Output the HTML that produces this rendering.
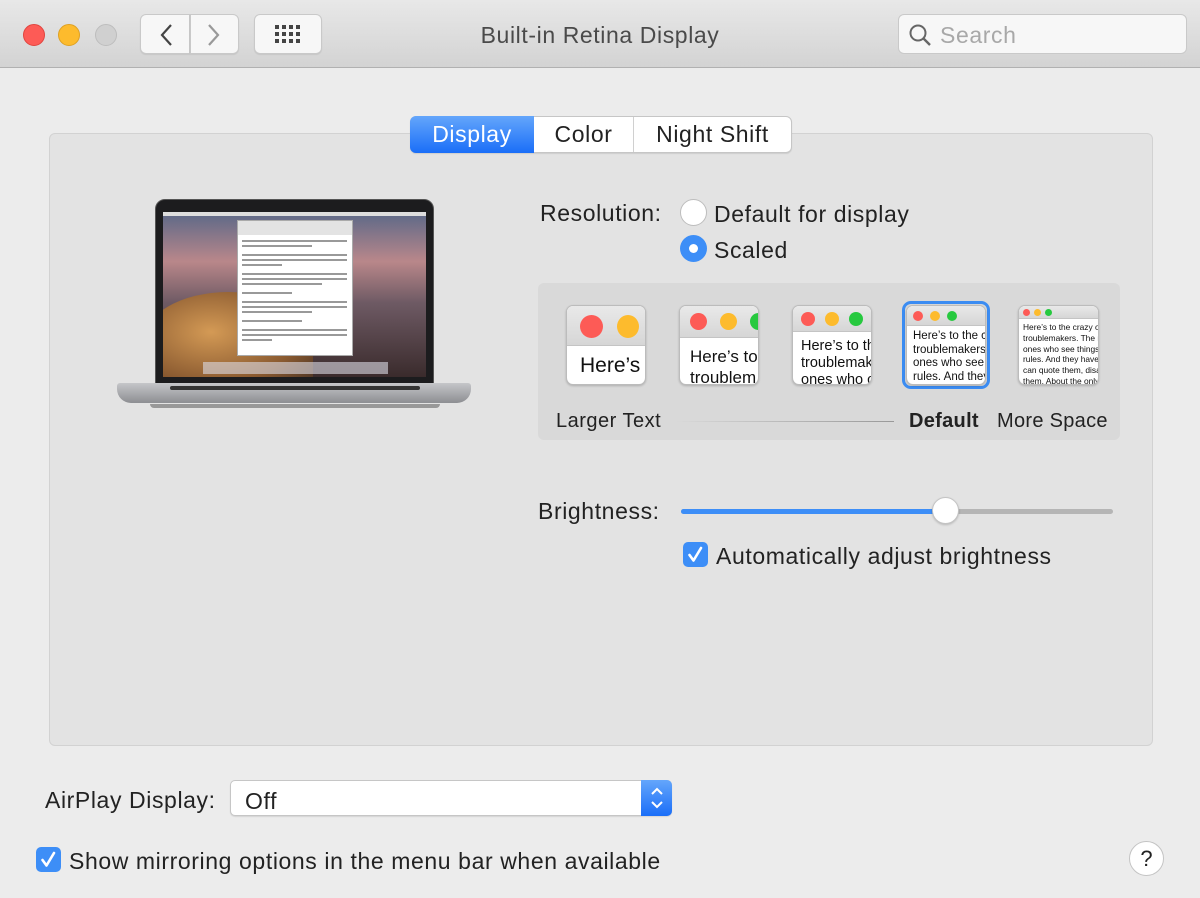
<!DOCTYPE html>
<html><head><meta charset="utf-8"><style>
*{box-sizing:border-box;margin:0;padding:0}
body{width:1200px;height:898px;background:#ececec;font-family:"Liberation Sans",sans-serif;color:#222;position:relative;overflow:hidden}
.a{position:absolute}
.tb{left:0;top:0;width:1200px;height:68px;background:linear-gradient(#e8e8e8,#d3d3d3);border-bottom:1px solid #b1b1b1}
.dot{width:22px;height:22px;border-radius:50%}
.btn{background:#f7f7f7;border:1px solid #c9c9c9;border-radius:6px;height:40px;top:14px;box-shadow:0 1px 1px rgba(0,0,0,.08)}
.lbl{font-size:23px;letter-spacing:0.6px;white-space:nowrap}
.thumb{background:#fff;border:1px solid #bcbcbc;border-radius:7px;overflow:hidden;box-shadow:0 1px 2px rgba(0,0,0,.2)}
.th{background:linear-gradient(#e9e9e9,#d6d6d6);border-bottom:1px solid #c4c4c4;position:relative}
.c{position:absolute;border-radius:50%}
.tt{color:#111;white-space:nowrap;position:absolute}
.ln{position:absolute;left:4px;height:1.5px;background:#999}
</style></head><body>
<div class="a tb"></div>
<div class="a dot" style="left:23px;top:24px;background:#fd5b56;border:1px solid #e0443e"></div>
<div class="a dot" style="left:58px;top:24px;background:#fdbb2d;border:1px solid #dea123"></div>
<div class="a dot" style="left:95px;top:24px;background:#d0d0d0;border:1px solid #bdbdbd"></div>
<div class="a btn" style="left:140px;width:50px;border-radius:6px 0 0 6px"></div>
<div class="a btn" style="left:190px;width:49px;border-radius:0 6px 6px 0"></div>
<svg class="a" style="left:155px;top:22px" width="80" height="26"><path d="M16 3 L7 13 L16 23" stroke="#444" stroke-width="2.2" fill="none"/><path d="M54 3 L63 13 L54 23" stroke="#999" stroke-width="2.2" fill="none"/></svg>
<div class="a btn" style="left:254px;width:68px"></div>
<svg class="a" style="left:275px;top:25px" width="28" height="20"><g fill="#444">
<rect x="0" y="0" width="4" height="4"/><rect x="7" y="0" width="4" height="4"/><rect x="14" y="0" width="4" height="4"/><rect x="21" y="0" width="4" height="4"/>
<rect x="0" y="7" width="4" height="4"/><rect x="7" y="7" width="4" height="4"/><rect x="14" y="7" width="4" height="4"/><rect x="21" y="7" width="4" height="4"/>
<rect x="0" y="14" width="4" height="4"/><rect x="7" y="14" width="4" height="4"/><rect x="14" y="14" width="4" height="4"/><rect x="21" y="14" width="4" height="4"/></g></svg>
<div class="a lbl" style="left:0;width:1200px;text-align:center;top:22px;font-size:23px;color:#4a4a4a">Built-in Retina Display</div>
<div class="a" style="left:898px;top:14px;width:289px;height:40px;background:#f7f7f7;border:1px solid #c9c9c9;border-radius:6px"></div>
<svg class="a" style="left:908px;top:23px" width="24" height="24"><circle cx="10" cy="10" r="7.5" stroke="#666" stroke-width="2" fill="none"/><path d="M15.5 15.5 L22 22" stroke="#666" stroke-width="2.4"/></svg>
<div class="a lbl" style="left:940px;top:22px;color:#a8a8a8">Search</div>

<div class="a" style="left:49px;top:133px;width:1104px;height:613px;background:#e3e3e3;border:1px solid #d2d2d2;border-radius:6px"></div>
<div class="a" style="left:410px;top:116px;width:382px;height:37px;background:#fff;border:1px solid #c6c6c6;border-radius:6px;box-shadow:0 1px 1px rgba(0,0,0,.1)"></div>
<div class="a" style="left:410px;top:116px;width:124px;height:37px;background:linear-gradient(#64a6fb,#1a6ef8);border-radius:6px 0 0 6px"></div>
<div class="a" style="left:633px;top:117px;width:1px;height:35px;background:#d0d0d0"></div>
<div class="a lbl" style="left:410px;width:124px;text-align:center;top:121px;color:#fff">Display</div>
<div class="a lbl" style="left:534px;width:99px;text-align:center;top:121px">Color</div>
<div class="a lbl" style="left:634px;width:157px;text-align:center;top:121px">Night Shift</div>

<!-- laptop -->
<div class="a" style="left:155px;top:199px;width:279px;height:186px;background:#1c1c1e;border-radius:10px 10px 0 0;border:1px solid #555"></div>
<div class="a" style="left:163px;top:212px;width:263px;height:165px;background:linear-gradient(#5b6888 0%,#b9878a 30%,#6e5a64 55%,#3a2b2c 100%);overflow:hidden">
<div class="a" style="left:0;top:0;width:263px;height:4px;background:#ddd"></div>
<div class="a" style="left:-20px;top:80px;width:170px;height:100px;background:radial-gradient(ellipse at 40% 40%,#d49a55,#8a5a30 60%,#3b2a22);border-radius:50% 50% 0 0"></div>
<div class="a" style="left:74px;top:8px;width:116px;height:136px;background:#fff;border:1px solid #aaa">
<div class="a" style="left:0;top:0;width:114px;height:14px;background:#e3e3e3"></div>
<div class="ln" style="top:19px;width:105px"></div><div class="ln" style="top:24px;width:70px"></div>
<div class="ln" style="top:33px;width:105px"></div><div class="ln" style="top:38px;width:105px"></div><div class="ln" style="top:43px;width:40px"></div>
<div class="ln" style="top:52px;width:105px"></div><div class="ln" style="top:57px;width:105px"></div><div class="ln" style="top:62px;width:80px"></div>
<div class="ln" style="top:71px;width:50px"></div>
<div class="ln" style="top:80px;width:105px"></div><div class="ln" style="top:85px;width:105px"></div><div class="ln" style="top:90px;width:70px"></div>
<div class="ln" style="top:99px;width:60px"></div>
<div class="ln" style="top:108px;width:105px"></div><div class="ln" style="top:113px;width:105px"></div><div class="ln" style="top:118px;width:30px"></div>
</div>
<div class="a" style="left:40px;top:150px;width:185px;height:12px;background:rgba(220,220,230,.6)"></div>
</div>
<div class="a" style="left:117px;top:383px;width:354px;height:20px;background:linear-gradient(#c5c6c9,#8d8e92);border-radius:3px 3px 14px 14px"></div>
<div class="a" style="left:170px;top:386px;width:250px;height:4px;background:#333;border-radius:2px"></div>
<div class="a" style="left:150px;top:404px;width:290px;height:4px;background:#666;border-radius:0 0 20px 20px;opacity:.6"></div>

<!-- resolution -->
<div class="a lbl" style="left:540px;top:200px">Resolution:</div>
<div class="a" style="left:680px;top:199px;width:27px;height:27px;border-radius:50%;background:#fff;border:1px solid #bdbdbd"></div>
<div class="a lbl" style="left:714px;top:201px">Default for display</div>
<div class="a" style="left:680px;top:235px;width:27px;height:27px;border-radius:50%;background:#3d8ef7"></div>
<div class="a" style="left:689px;top:244px;width:9px;height:9px;border-radius:50%;background:#fff"></div>
<div class="a lbl" style="left:714px;top:237px">Scaled</div>

<div class="a" style="left:538px;top:283px;width:582px;height:157px;background:#d9d9d9;border-radius:6px"></div>
<div class="a thumb" style="left:566px;top:305px;width:80px;height:80px"><div class="th" style="height:40px"><div class="c" style="left:13px;top:9px;width:23px;height:23px;background:#fd5b56"></div><div class="c" style="left:50px;top:9px;width:22px;height:23px;background:#fdbb2d"></div></div><div class="tt" style="left:13px;top:48px;font-size:21px">Here’s</div></div>
<div class="a thumb" style="left:679px;top:305px;width:80px;height:80px"><div class="th" style="height:32px"><div class="c" style="left:10px;top:7px;width:17px;height:17px;background:#fd5b56"></div><div class="c" style="left:40px;top:7px;width:17px;height:17px;background:#fdbb2d"></div><div class="c" style="left:70px;top:7px;width:17px;height:17px;background:#27c93f"></div></div><div class="tt" style="left:10px;top:40px;font-size:17px;line-height:21px">Here’s to<br>troublem</div></div>
<div class="a thumb" style="left:792px;top:305px;width:80px;height:80px"><div class="th" style="height:26px"><div class="c" style="left:8px;top:6px;width:14px;height:14px;background:#fd5b56"></div><div class="c" style="left:32px;top:6px;width:14px;height:14px;background:#fdbb2d"></div><div class="c" style="left:56px;top:6px;width:14px;height:14px;background:#27c93f"></div></div><div class="tt" style="left:8px;top:32px;font-size:14.5px;line-height:17px">Here’s to th<br>troublemak<br>ones who c</div></div>
<div class="a" style="left:902px;top:301px;width:88px;height:88px;border:3px solid #3b8cf2;border-radius:9px"></div>
<div class="a thumb" style="left:906px;top:305px;width:80px;height:80px"><div class="th" style="height:20px"><div class="c" style="left:6px;top:5px;width:10px;height:10px;background:#fd5b56"></div><div class="c" style="left:23px;top:5px;width:10px;height:10px;background:#fdbb2d"></div><div class="c" style="left:40px;top:5px;width:10px;height:10px;background:#27c93f"></div></div><div class="tt" style="left:6px;top:24px;font-size:11.5px;line-height:13.5px">Here’s to the cr<br>troublemakers.<br>ones who see t<br>rules. And they</div></div>
<div class="a thumb" style="left:1018px;top:305px;width:81px;height:80px"><div class="th" style="height:13px"><div class="c" style="left:4px;top:3px;width:7px;height:7px;background:#fd5b56"></div><div class="c" style="left:15px;top:3px;width:7px;height:7px;background:#fdbb2d"></div><div class="c" style="left:26px;top:3px;width:7px;height:7px;background:#27c93f"></div></div><div class="tt" style="left:4px;top:16px;font-size:8.4px;line-height:10.8px">Here’s to the crazy one<br>troublemakers. The rou<br>ones who see things dif<br>rules. And they have no<br>can quote them, disagre<br>them. About the only th<br>Because they change th</div></div>
<div class="a lbl" style="left:556px;top:410px;font-size:20px;letter-spacing:0.5px">Larger Text</div>
<div class="a" style="left:676px;top:421px;width:218px;height:1px;background:linear-gradient(90deg,rgba(150,150,150,0),#999)"></div>
<div class="a lbl" style="left:909px;top:410px;font-size:20px;font-weight:bold;letter-spacing:0.3px">Default</div>
<div class="a lbl" style="left:997px;top:410px;font-size:20px;letter-spacing:0.3px">More Space</div>

<!-- brightness -->
<div class="a lbl" style="left:538px;top:498px">Brightness:</div>
<div class="a" style="left:681px;top:509px;width:432px;height:5px;background:#b5b5b5;border-radius:3px"></div>
<div class="a" style="left:681px;top:509px;width:265px;height:5px;background:#3d8ef7;border-radius:3px"></div>
<div class="a" style="left:932px;top:497px;width:27px;height:27px;border-radius:50%;background:#fff;border:1px solid #c4c4c4;box-shadow:0 1px 2px rgba(0,0,0,.2)"></div>
<div class="a" style="left:683px;top:542px;width:25px;height:25px;border-radius:5px;background:#3d8ef7"></div>
<svg class="a" style="left:683px;top:542px" width="25" height="25"><path d="M6.5 13 L10.5 18.5 L18 6" stroke="#fff" stroke-width="2.6" fill="none" stroke-linecap="round" stroke-linejoin="round"/></svg>
<div class="a lbl" style="left:716px;top:543px">Automatically adjust brightness</div>

<!-- airplay -->
<div class="a lbl" style="left:45px;top:787px">AirPlay Display:</div>
<div class="a" style="left:230px;top:780px;width:442px;height:36px;background:#fff;border:1px solid #c6c6c6;border-radius:5px;box-shadow:0 1px 1px rgba(0,0,0,.1)"></div>
<div class="a" style="left:641px;top:780px;width:31px;height:36px;background:linear-gradient(#64a6fb,#1a6ef8);border-radius:0 5px 5px 0"></div>
<svg class="a" style="left:648px;top:784px" width="18" height="28"><path d="M4 10 L9 5 L14 10 M4 18 L9 23 L14 18" stroke="#fff" stroke-width="2" fill="none"/></svg>
<div class="a lbl" style="left:245px;top:788px">Off</div>
<div class="a" style="left:36px;top:847px;width:25px;height:25px;border-radius:5px;background:#3d8ef7"></div>
<svg class="a" style="left:36px;top:847px" width="25" height="25"><path d="M6.5 13 L10.5 18.5 L18 6" stroke="#fff" stroke-width="2.6" fill="none" stroke-linecap="round" stroke-linejoin="round"/></svg>
<div class="a lbl" style="left:69px;top:848px">Show mirroring options in the menu bar when available</div>
<div class="a" style="left:1129px;top:841px;width:35px;height:35px;border-radius:50%;background:#fff;border:1px solid #c4c4c4;text-align:center;font-size:22px;line-height:33px">?</div>
</body></html>
